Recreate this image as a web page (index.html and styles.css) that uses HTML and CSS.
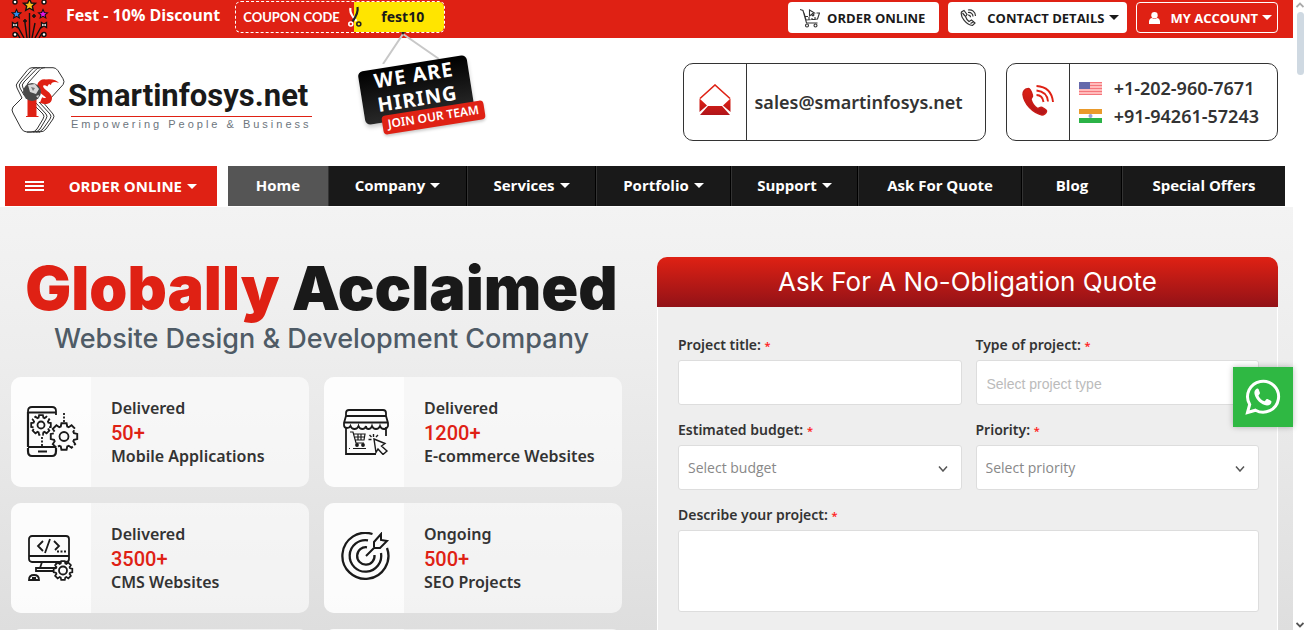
FILE: index.html
```html
<!DOCTYPE html>
<html lang="en">
<head>
<meta charset="utf-8">
<title>Smartinfosys.net</title>
<meta name="viewport" content="width=device-width, initial-scale=1">
<link rel="stylesheet" href="styles.css">
</head>
<body>
<svg width="0" height="0" class="defs" aria-hidden="true">
  <defs>
    <linearGradient id="redfade" x1="0" y1="0" x2="0" y2="1"><stop offset="0" stop-color="#df2114"/><stop offset="1" stop-color="#b0151a"/></linearGradient>
    <path id="star" d="M0-6 1.8-2 6-1.6 2.8 1.2 3.8 5.4 0 3.2-3.8 5.4-2.8 1.2-6-1.6-1.8-2z"/>
    <path id="gear" d="M-2.400-7.400-1.900-9.800H1.900L2.400-7.400 3.500-6.900 5.600-8.300 8.300-5.600 6.900-3.500 7.400-2.400 9.800-1.900V1.900L7.400 2.400 6.900 3.500 8.300 5.600 5.600 8.300 3.500 6.900 2.400 7.400 1.900 9.800H-1.900L-2.400 7.400-3.500 6.900-5.600 8.300-8.300 5.600-6.900 3.500-7.400 2.400-9.800 1.900V-1.900L-7.400-2.400-6.900-3.500-8.300-5.600-5.600-8.300-3.500-6.900z"/>
  </defs>
</svg>
<div class="page">
  <div class="topbar">
    <div class="offer">
      <svg class="fireworks" width="38" height="38" viewBox="0 0 38 38" fill="none" stroke="#111" stroke-width="1.4">
        <path d="M18.500 38V13M16 38 14 23M21 38l3-15M13 38 7 27M24 38l6-11M9 38l-3-5M28 38l3-5"/>
        <path d="M23 14v4M21 16h4M14 19v4M12 21h4" stroke-width="1.600"/>
        <use href="#star" transform="translate(18.500 5)" fill="#fcbf1c"/>
        <use href="#star" transform="translate(5.500 14) scale(.75)" fill="#2f8df0"/>
        <use href="#star" transform="translate(32 14) scale(.75)" fill="#e417e4"/>
        <g fill="#fff"><circle cx="4" cy="2" r="2"/><circle cx="33" cy="2" r="2"/><circle cx="4" cy="34.500" r="2"/><circle cx="33" cy="34.500" r="2"/><path d="M1.500 22.500 4 24l2.500-1.500v5L4 26l-2.500 1.500zM30.500 22.500 33 24l2.500-1.500v5L33 26l-2.500 1.500z"/></g>
      </svg>
      <strong>Fest - 10% Discount</strong>
      <div class="coupon">
        <span class="coupon-label">COUPON CODE</span>
        <span class="coupon-value">fest10</span>
        <svg class="scissors" width="14" height="22" viewBox="0 0 14 22" fill="none" stroke-width="1.600">
          <path d="M2.500 2c-1 4 1 8 6 13" stroke="#fff" stroke-width="2.200"/><circle cx="2.800" cy="18" r="2" stroke="#fff"/>
          <path d="M9.500 1c1 5-1 9-5 14.500" stroke="#222" stroke-width="2.200"/><circle cx="10.800" cy="18" r="2" stroke="#222"/>
        </svg>
      </div>
    </div>
    <div class="actions">
      <a class="action order" href="#">
        <svg width="20" height="20" viewBox="0 0 20 20" fill="none" stroke="#333" stroke-width="1.100"><path d="M0 1.500 3 2.500 6.500 15h11M4 5l2 7 11.500-1L19.500 5h-3M5 8.500h3M9 9v3M12 10v2M15 9v3M9.500 2v6l2-1.500 1.500 1.500 1-1-1.500-1.500 2-.5z"/><circle cx="7" cy="17.500" r="1.500"/><circle cx="15.500" cy="17.500" r="1.500"/></svg>
        ORDER ONLINE</a>
      <button class="action contact" type="button">
        <svg width="17" height="18" viewBox="0 0 17 18" fill="none" stroke="#333" stroke-width="1.200"><path d="M4 1.500 1.500 3c-1.500 5 5 13 11 13.500L15 14l-3.500-3-2.500 1.500C7 11 6 9 5.500 7.500L7 5.500 4 1.500zM2.500 4l2.500 3M10.500 14.500 14 12.500M8 1c4-1 7.500 2 7.500 6M8 3.500c3-.5 5 1.500 5 4M8 6c1.500 0 2.500.8 2.500 2.200"/></svg>
        <span>CONTACT DETAILS</span><i class="caret"></i></button>
      <button class="action account" type="button">
        <svg width="11" height="12" viewBox="0 0 11 12" fill="#fff"><circle cx="5.500" cy="3.200" r="3.200"/><path d="M0 12V9.500C0 7 2 6 3 6c1.500 1.400 3.500 1.400 5 0 1 0 3 1 3 3.500V12z"/></svg>
        <span>MY ACCOUNT</span><i class="caret"></i></button>
    </div>
  </div>

  <header class="masthead">
    <a class="logo" href="#">
      <svg width="54" height="66" viewBox="0 0 54 66" fill="none" stroke="#333" stroke-width="1">
        <path d="M33 .7h9q3 0 5 3l5 8q2 3 0 6L38 33M33 .7q-3 0-5 3L17 16q-2 2 0 5M29 .7q-3 0-5 3L13 15q-3 3-1 6l3 5M25 .7q-3 0-5 3L10 15q-3 3-1 6l4 7M25 .7h9M21 .7q-3 0-5 3L7 15q-3 3-1 6l5 10M21 .7h5"/>
        <path d="M11 31 2 40q-2 3 0 6l8 15q2 4 6 4h4q4 0 6-3l6-10q2-3 0-5L21 36M22 65q5 0 7-3l6-10q2-3 0-5l-10-11M25 65q5 0 7-3l7-10q2-3 0-5L28 35M28 65q5 0 7-3l7-10q2-3 0-5L31 34M16 65h13"/>
        <path d="M38 17c-6-4-11 0-8 5 2 4 8 5 8 9 0 3-3 4-8 2" stroke="#df2114" stroke-width="6"/>
        <g stroke="none"><path d="M32 14c5-3 13-2 16 2-4-2-8-1-8 2z" fill="#df2114"/><path d="M16.500 29h9v20h2v1H15v-1h1.500z" fill="#df2114"/><circle cx="21" cy="25" r="9" fill="#4a4a4a"/><path d="m17 18 7-1 4 5-3 5-6-2zM25 29l3-1-1 3z" fill="#d8d8d8"/><path d="m20 20 4 1-2 3z" fill="#777"/></g>
      </svg>
      <span class="wordmark"><b>Smartinfosys.net</b><small>Empowering People &amp; Business</small></span>
    </a>
    <a class="hiring" href="#">
      <svg class="hanger" width="62" height="32" viewBox="0 0 62 32" fill="none"><path d="M4 32 24 2M24 2 60 27" stroke="#c8c8c8" stroke-width="2"/><path d="M22 0h4l-2 3z" fill="#222"/></svg>
      <span class="plate">WE ARE<br>HIRING</span>
      <span class="ribbon">JOIN OUR TEAM</span>
    </a>
    <div class="contacts">
      <div class="contact-box mail">
        <div class="contact-icon">
          <svg width="32" height="32" viewBox="0 0 32 32"><path d="M1 14.500 16 1l15 13.500" fill="none" stroke="#df2114" stroke-width="1.600"/><path d="M.5 14.500V28L8 21.500zM31.500 14.500V28L24 21.500zM1 31h30L23 22H9z" fill="url(#redfade)"/></svg>
        </div>
        <div class="contact-text"><a href="#">sales@smartinfosys.net</a></div>
      </div>
      <div class="contact-box phone">
        <div class="contact-icon">
          <svg width="32" height="32" viewBox="0 0 32 32"><path d="M6 4.500c-3 .5-5 3-5 6C2 20 11 29 20 31c2 0 4-2 4.500-3.500.5-1-.5-2-4.500-4-2-1-3 1.500-4.500 1C13 23 10 19 9 15.500 9 14 11 13 10.500 11.500 9 6 8 4 6 4.500z" fill="url(#redfade)" stroke="#c81c17" stroke-width="1.500"/><path d="M14.500 11q6 0 7 7M14.500 6.500q10.500 1 11.500 11M14.500 2q15 1 16.500 16" fill="none" stroke="#df2114" stroke-width="1.900"/></svg>
        </div>
        <div class="contact-text">
          <a href="#"><svg width="23" height="13" viewBox="0 0 23 13"><path fill="#fbb" d="M0 0h23v13H0z"/><path d="M0 .5h23M0 3.500h23M0 6.500h23M0 9.500h23M0 12.500h23" stroke="#f4757b"/><path fill="#6569ab" d="M0 0h11v7H0z"/></svg>+1-202-960-7671</a>
          <a href="#"><svg width="23" height="14" viewBox="0 0 23 14"><path fill="#fff" d="M0 0h23v14H0z"/><path fill="#e99a2b" d="M0 0h23v5H0z"/><path fill="#2bb347" d="M0 9h23v5H0z"/><circle cx="11.500" cy="7" r="2" fill="#9aa3d8"/></svg>+91-94261-57243</a>
        </div>
      </div>
    </div>
  </header>

  <div class="navrow">
    <button class="menu" type="button"><span class="bars"></span><span class="menu-text">ORDER ONLINE<i class="caret"></i></span></button>
    <nav class="nav">
      <a class="active" href="#">Home</a>
      <a href="#">Company<i class="caret"></i></a>
      <a href="#">Services<i class="caret"></i></a>
      <a href="#">Portfolio<i class="caret"></i></a>
      <a href="#">Support<i class="caret"></i></a>
      <a href="#">Ask For Quote</a>
      <a href="#">Blog</a>
      <a href="#">Special Offers</a>
    </nav>
  </div>

  <main class="hero">
    <section class="intro">
      <h1><em>Globally</em> Acclaimed</h1>
      <p class="tagline">Website Design &amp; Development Company</p>
      <div class="stats">
        <article class="stat">
          <div class="stat-icon">
            <svg width="56" height="54" viewBox="-3 0 56 54" fill="none" stroke="#1a1a1a" stroke-width="1.800"><path d="M2 42V6q0-4 4-4h20q4 0 4 4v4M2 7.500h28M2 42h28"/><path d="M2 43v3q0 5 4 5h20q4 0 4-5v-3M12 46.500h9M2 42V7" stroke-width="2.200"/><use href="#gear" transform="translate(15 20)" stroke-dasharray="13 2"/><circle cx="15" cy="20" r="3.500"/><path d="M16 32v9M38 8v9" stroke-dasharray="2 1.500"/><path d="M26 24h7v14h-7z" fill="#fcfcfc" stroke="none"/><use href="#gear" transform="translate(38 31.500) scale(1.350)" fill="#fcfcfc" stroke-width="1.400" stroke-dasharray="16 1.500"/><circle cx="38" cy="31.500" r="4.500"/></svg>
          </div>
          <div class="stat-text"><span>Delivered</span><strong>50+</strong><span>Mobile Applications</span></div>
        </article>
        <article class="stat">
          <div class="stat-icon">
            <svg width="50" height="46" viewBox="-4 0 50 46" fill="none" stroke="#1a1a1a" stroke-width="1.800"><path d="M3 8V4q0-3 3-3h34q3 0 3 3v4M3 7h40L45 14v3q-1 3-4 3-3 0-4-3-1 3-4 3-3 0-4-3-1 3-3.500 3Q23 20 23 17q-1 3-3.500 3-3 0-4-3-1 3-4 3-3 0-4-3-1 2-3.500 2Q1 19 1 16v-2zM1 13.500h44M3 19v26h30M43 18v9"/><path d="M7 23h3l3 11h8M11 25h11l-1 6h-9M12 28h9M15 25v6M18 25v6M10 39.500h13M6 39.500h1" stroke-width="1.200"/><circle cx="14" cy="36" r="1"/><circle cx="20" cy="36" r="1"/><path d="m31 30 11 4.500-3.500 2.500 5.500 5-4 3.500-5-5.500-2 3.500zM30.500 25v3M25.500 30.500h3M26.500 26l2 2M35 26l-2 2" stroke-width="1.400"/></svg>
          </div>
          <div class="stat-text"><span>Delivered</span><strong>1200+</strong><span>E-commerce Websites</span></div>
        </article>
        <article class="stat">
          <div class="stat-icon">
            <svg width="50" height="46" viewBox="-2 0 50 46" fill="none" stroke="#1a1a1a" stroke-width="1.800"><rect x="1" y="1" width="40" height="26" rx="3"/><path d="M1 21h40M15 6l-5 5 5 5M22 4l-5 14M26 6l5 5-4 4"/><path d="M29 16.500h9" stroke-dasharray="2 1.500"/><path d="M14 27l-2 6M28 27l1 5M8 33h20v3H8zM1 45q0-5 5-5t5 5zM4 43h4"/><use href="#gear" transform="translate(35 35.500) scale(.95)" fill="#fcfcfc"/><circle cx="35" cy="35.500" r="4"/></svg>
          </div>
          <div class="stat-text"><span>Delivered</span><strong>3500+</strong><span>CMS Websites</span></div>
        </article>
        <article class="stat">
          <div class="stat-icon">
            <svg width="52" height="52" viewBox="-3 2 52 52" fill="none" stroke="#1a1a1a" stroke-width="2.300"><path d="M31.500 4A23 23 0 1 0 46 18"/><path d="M27 10.300A15.800 15.800 0 1 0 40 23"/><path d="M26 17.300A8.700 8.700 0 1 0 33.500 25"/><path d="M25 26 34 17M33 17V12l7-8v6l6 1-7 7h-6" stroke-width="2"/></svg>
          </div>
          <div class="stat-text"><span>Ongoing</span><strong>500+</strong><span>SEO Projects</span></div>
        </article>
        <article class="stat"><div class="stat-icon"></div></article>
        <article class="stat"><div class="stat-icon"></div></article>
      </div>
    </section>

    <form class="quote">
      <h2>Ask For A No-Obligation Quote</h2>
      <div class="fields">
        <div class="field"><label for="title">Project title: <sup>*</sup></label><input id="title" type="text"></div>
        <div class="field"><label for="type">Type of project: <sup>*</sup></label><input id="type" type="text" placeholder="Select project type"></div>
        <div class="field"><label for="budget">Estimated budget: <sup>*</sup></label>
          <div class="select"><select id="budget"><option>Select budget</option></select><svg width="10" height="6" viewBox="0 0 10 6"><path d="M1 .5 5 5l4-4.500" fill="none" stroke="#555" stroke-width="1.500"/></svg></div></div>
        <div class="field"><label for="priority">Priority: <sup>*</sup></label>
          <div class="select"><select id="priority"><option>Select priority</option></select><svg width="10" height="6" viewBox="0 0 10 6"><path d="M1 .5 5 5l4-4.500" fill="none" stroke="#555" stroke-width="1.500"/></svg></div></div>
        <div class="field wide"><label for="describe">Describe your project: <sup>*</sup></label><textarea id="describe"></textarea></div>
      </div>
    </form>
  </main>
</div>
<div class="scrollbar" aria-hidden="true">
  <svg width="8" height="6" viewBox="0 0 8 6"><path d="M.5 5 4 1.500 7.500 5" fill="none" stroke="#aaa" stroke-width="1.800"/></svg>
  <div class="thumb"></div>
  <svg class="down" width="8" height="6" viewBox="0 0 8 6"><path d="M.5 1 4 4.500 7.500 1" fill="none" stroke="#555" stroke-width="1.800"/></svg>
</div>
<a class="whatsapp" href="#" aria-label="WhatsApp">
  <svg width="36" height="36" viewBox="0 0 36 36" fill="none" stroke="#fff"><path d="M2.500 33.500 4.700 25.500A15.500 15.500 0 1 1 10.500 31.200z" stroke-width="3"/><path d="M12 9.500c-2 1-3 3-2.500 5.500C11 21 16 25.500 22 26.500c2.500 0 4.500-1.500 4.500-4 0-.6-3.500-2.500-4.500-2.500s-1.500 2.200-2.500 2.200c-2.500-.7-5-3-6-5.500 0-1 1.500-1.500 1.500-2.700L13.500 10q-.5-.8-1.500-.5z" fill="#fff" stroke="none"/></svg>
</a>
</body>
</html>
```
FILE: styles.css
```css
* { box-sizing: border-box; }
body { margin: 0; height: 100vh; overflow: hidden; display: flex; background: #fff; color: #333; font-family: "Noto Sans", "Open Sans", sans-serif; }
a { color: inherit; text-decoration: none; }
button { font-family: inherit; border: 0; cursor: pointer; }
svg { flex: none; display: block; }
.defs { position: absolute; }
.page { flex: 1; min-width: 0; display: flex; flex-direction: column; }
.caret { display: inline-block; flex: none; border: 5px solid transparent; border-top-color: currentColor; border-bottom: 0; }

.topbar { display: flex; justify-content: space-between; height: 38px; padding: 0 15px 0 11px; background: #df2114; color: #fff; overflow: hidden; flex: none; }
.offer { display: flex; align-items: flex-start; }
.offer strong { margin: 0 15px 0 17px; font-size: 16px; line-height: 31px; font-family: "Open Sans", sans-serif; }
.coupon { position: relative; display: flex; margin-top: 1px; height: 32px; line-height: 30px; border: 1px dashed #fff; border-radius: 6px; overflow: hidden; }
.coupon-label { width: 118px; padding-left: 7px; font-family: Lato, sans-serif; font-size: 13px; font-weight: 700; }
.coupon-value { width: 90px; padding-left: 7px; text-align: center; background: #ffe500; color: #1a1a1a; font-size: 14px; font-weight: 700; }
.scissors { position: absolute; left: 112px; top: 4px; }
.actions { display: flex; gap: 9px; margin-top: 2px; }
.action { display: flex; align-items: center; height: 31px; border-radius: 4px; background: #fff; color: #1a1a1a; font-family: "Open Sans", sans-serif; font-size: 13px; font-weight: 700; white-space: nowrap; }
.order { padding: 0 14px 0 12px; gap: 7px; }
.contact { padding: 0 8px 0 12px; }
.contact span { margin: 0 5px 0 10px; }
.account { padding: 0 5px 0 12px; background: #df2114; color: #fff; border: 1px solid #fff; }
.account span { margin: 0 4px 0 10px; }

.masthead { position: relative; display: flex; justify-content: space-between; align-items: flex-start; height: 128px; padding: 25px 15px 0 11px; flex: none; }
.logo { display: flex; gap: 3px; padding-top: 4px; color: #1a1a1a; }
.wordmark { display: flex; flex-direction: column; }
.wordmark b { font-family: Roboto, sans-serif; font-size: 31px; line-height: 38px; height: 49px; padding-top: 10px; }
.wordmark small { margin-left: 3px; border-top: 1px solid #df2114; font-family: "Liberation Sans", sans-serif; font-size: 11px; line-height: 14px; letter-spacing: 3px; color: #6c757d; }
.hiring { position: absolute; left: 358px; top: -6px; width: 130px; height: 110px; color: #fff; font-weight: 600; }
.hanger { position: absolute; left: 21px; top: 0; }
.plate { position: absolute; left: 3px; top: 31px; width: 110px; height: 54px; transform: rotate(-9deg); border-radius: 5px; background: linear-gradient(#000, #292929); font-size: 20px; font-weight: 700; line-height: 24px; letter-spacing: 1px; text-align: center; box-shadow: 0 3px 4px #0003; }
.ribbon { position: absolute; left: 24px; top: 76px; width: 103px; height: 19px; transform: rotate(-9deg); border-radius: 4px; background: #df2114; font-size: 12px; line-height: 18px; text-align: center; box-shadow: 0 2px 3px #0003; white-space: nowrap; }
.contacts { display: flex; gap: 20px; }
.contact-box { display: flex; height: 78px; border: 1px solid #333; border-radius: 10px; }
.contact-icon { display: grid; place-items: center; width: 63px; border-right: 1px solid #333; }
.contact-icon svg { margin-bottom: 4px; }
.contact-text { display: flex; flex-direction: column; justify-content: center; font-size: 18px; line-height: 28px; font-weight: 600; color: #333; }
.contact-text a { display: flex; align-items: center; gap: 12px; white-space: nowrap; }
.mail .contact-text { padding: 0 22px 0 7px; }
.phone .contact-text { padding: 0 18px 0 9px; }

.navrow { display: flex; gap: 11px; height: 41px; padding: 0 8px 1px 5px; flex: none; }
.menu { width: 212px; padding: 0 20px; display: flex; align-items: center; gap: 25px; background: #df2114; color: #fff; font-family: "Open Sans", sans-serif; font-size: 15px; font-weight: 700; }
.menu-text { display: flex; align-items: center; gap: 5px; white-space: nowrap; }
.bars { width: 20px; height: 10px; border: solid #fff; border-width: 2px 0; background: linear-gradient(#fff, #fff) center / 100% 2px no-repeat; }
.nav { flex: 1; display: grid; grid-template-columns: 100fr 139fr 129fr 135fr 127fr 164fr 100fr 163fr; background: #191919; }
.nav a { display: flex; align-items: center; justify-content: center; gap: 5px; padding-bottom: 2px; color: #fff; font-family: "Open Sans", sans-serif; font-size: 15px; font-weight: 700; border-left: 1px solid #333; border-right: 1px solid #000; white-space: nowrap; }
.nav a.active { background: #555; border-color: #555; }
.nav a:last-child { border-right: 0; }

.hero { flex: 1; min-height: 0; overflow: hidden; display: grid; grid-template-columns: 611fr 621fr; column-gap: 35px; padding: 50px 15px 0 11px; background: linear-gradient(#f3f3f3, #ededed 35%, #dedede); }
.intro { text-align: center; min-width: 0; }
h1 { margin: 0; padding-left: 10px; font-family: Inter, sans-serif; font-size: 61px; line-height: 62px; font-weight: 900; color: #191919; white-space: nowrap; }
h1 em { font-style: normal; color: #df2114; }
.tagline { margin: 5px 0 23px; padding-left: 10px; font-family: Inter, sans-serif; font-size: 27px; line-height: 30px; font-weight: 500; color: #4f5b66; white-space: nowrap; }
.stats { display: grid; grid-template-columns: 1fr 1fr; gap: 16px 15px; text-align: left; }
.stat { display: flex; height: 110px; border-radius: 10px; overflow: hidden; background: #ffffff99; }
.stat-icon { width: 80px; display: grid; place-items: center; background: #ffffffb3; }
.stat-text { padding: 19px 0 0 20px; display: flex; flex-direction: column; font-size: 16px; line-height: 24px; font-weight: 600; white-space: nowrap; }
.stat-text strong { padding-top: 1px; height: 24px; font-family: Roboto, sans-serif; font-size: 20px; font-weight: 500; color: #df2114; }

.quote h2 { margin: 0; height: 50px; border-radius: 10px 10px 0 0; background: linear-gradient(#df2114, #921217); color: #fff; text-align: center; font-family: Inter, sans-serif; font-size: 26px; line-height: 50px; font-weight: 400; }
.fields { display: grid; grid-template-columns: 1fr 1fr; column-gap: 14px; row-gap: 15px; padding: 28px 18px 40px 20px; border: 1px solid #fff; border-top: 0; background: #eee; }
.field { display: flex; flex-direction: column; min-width: 0; }
.wide { grid-column: 1 / 3; }
.field label { font-size: 14px; line-height: 20px; font-weight: 600; margin-bottom: 5px; }
.field sup { color: #f22; font-size: 11px; line-height: 10px; vertical-align: 0; }
.field input, .field select, .field textarea { width: 100%; height: 45px; padding: 0 9px; border: 1px solid #ddd; border-radius: 3px; background: #fff; color: #888; font: 14px "Open Sans", sans-serif; appearance: none; resize: none; }
.field input { font-family: "Liberation Sans", sans-serif; padding: 3px 10px 0; }
.field input::placeholder { color: #bbb; }
.field textarea { height: 82px; }
.select { position: relative; }
.select svg { position: absolute; right: 14px; top: 21px; }

.scrollbar { width: 14px; display: flex; flex-direction: column; align-items: center; padding: 2px 0; background: #fff; }
.thumb { width: 7px; height: 63px; margin-top: 4px; border-radius: 4px; background: #cfd9e2; }
.down { margin-top: auto; }
.whatsapp { position: fixed; right: 14px; top: 367px; width: 60px; height: 60px; display: grid; place-items: center; background: #2fb843; box-shadow: 0 0 6px #0004; }
```
